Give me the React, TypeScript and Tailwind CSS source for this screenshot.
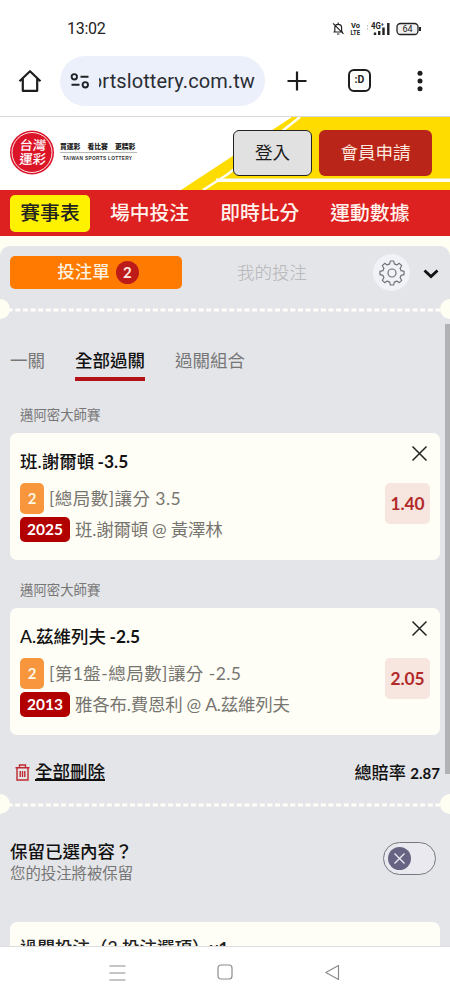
import React from 'react';

const navItems = ['賽事表', '場中投注', '即時比分', '運動數據'];

const bets = [
  {
    league: '邁阿密大師賽',
    player: '班.謝爾頓',
    handicap: '-3.5',
    market: '[總局數]讓分 3.5',
    code: '2025',
    match: '班.謝爾頓 @ 黃澤林',
    odds: '1.40',
  },
  {
    league: '邁阿密大師賽',
    player: 'A.茲維列夫',
    handicap: '-2.5',
    market: '[第1盤-總局數]讓分 -2.5',
    code: '2013',
    match: '雅各布.費恩利 @ A.茲維列夫',
    odds: '2.05',
  },
];

function StatusBar() {
  return (
    <div className="flex h-[56px] items-center justify-between pl-[67px] pr-[28px] pt-[2px]">
      <span className="font-['Roboto',sans-serif] text-[16px] leading-none tracking-[-0.3px] text-[#222]">13:02</span>
      <svg width="90" height="16" viewBox="0 0 90 16" fill="none" stroke="#222">
        {/* muted bell */}
        <path d="M1.5 11h9.5M2.8 10.500V6.7a3.4 3.4 0 0 1 6.8 0v3.800M6.2 3V1.500M5 13h2.4M1 2.300l10.500 10.500" strokeWidth="1.2" />
        {/* signal bars */}
        <path d="M43 14v-2.500M47.200 14v-4M51.500 14V6.500M56.300 14V2" strokeWidth="2.4" />
        {/* battery */}
        <rect x="65" y="2.500" width="21" height="11" rx="3.5" strokeWidth="1.3" fill="#f0f0f0" />
        <path d="M88 6v4" strokeWidth="2" />
        <g fill="#222" stroke="none" fontFamily="Roboto, sans-serif" fontWeight="700">
          <text x="19" y="7.2" fontSize="8" textLength="9" lengthAdjust="spacingAndGlyphs">Vo</text>
          <text x="18.500" y="14.2" fontSize="8" textLength="9.500" lengthAdjust="spacingAndGlyphs">LTE</text>
          <text x="39" y="8.2" fontSize="8.500" textLength="13" lengthAdjust="spacingAndGlyphs">4G⁺</text>
          <text x="70.500" y="11.300" fontSize="9" fontWeight="400">64</text>
        </g>
        <path d="M35.5 4v1.5M35.5 7v1.5" stroke="#bbb" />
      </svg>
    </div>
  );
}

function BrowserBar() {
  return (
    <div className="flex h-[61px] items-start border-b border-[#d9d9d9]">
      <svg className="ml-[18px] mt-[13px] shrink-0" width="24" height="24" viewBox="0 0 24 24" fill="none" stroke="#1d1d1d" strokeWidth="2.2">
        <path d="M1.500 12.2 12 2.2l10.500 10M4.800 9.500v12.300h14.400V9.500" strokeLinejoin="round" />
      </svg>
      <div className="ml-[18px] flex h-[50px] w-[205px] shrink-0 items-center rounded-full bg-[#ecf0fa] pl-[10px]">
        <svg width="20" height="18" viewBox="0 0 20 18" fill="none" stroke="#1f2328" strokeWidth="1.9">
          <circle cx="4.300" cy="4.800" r="2.700" />
          <path d="M10.500 4.800h8M1.500 12.800h8" />
          <circle cx="15.300" cy="12.800" r="2.700" />
        </svg>
        {/* the address is scrolled to its end */}
        <div className="ml-[9px] flex w-[156px] justify-end overflow-hidden">
          <span className="whitespace-nowrap font-['Roboto',sans-serif] text-[20px] leading-[26px] tracking-[0.1px] text-[#2a2d35]">sportslottery.com.tw</span>
        </div>
      </div>
      <svg className="ml-[22px] mt-[15px] shrink-0" width="20" height="20" viewBox="0 0 20 20" stroke="#1d1d1d" strokeWidth="2.200">
        <path d="M10 .5v19M.5 10h19" />
      </svg>
      <div className="ml-[41px] mt-[13px] flex h-[23px] w-[23px] items-center justify-center rounded-[6px] border-2 border-[#1d1d1d] font-['Roboto',sans-serif] text-[10.500px] font-bold leading-none text-[#1d1d1d]">
        :D
      </div>
      <svg className="ml-[45px] mt-[13px] shrink-0" width="8" height="24" viewBox="0 0 8 24" fill="#1d1d1d">
        <circle cx="4" cy="4.200" r="2.500" />
        <circle cx="4" cy="12" r="2.500" />
        <circle cx="4" cy="19.800" r="2.500" />
      </svg>
    </div>
  );
}

function SiteHeader() {
  return (
    <header className="relative flex h-[73px] shrink-0 items-start bg-white">
      <svg className="absolute inset-0" width="450" height="73" viewBox="0 0 450 73">
        <path d="M181 73 292 0H450V73Z" fill="#ffdc00" />
        <path d="M203 73 228 57 300 0" fill="none" stroke="#fffef5" strokeWidth="2.500" />
        <path d="M216 63.200H450" stroke="#fffef5" strokeWidth="3.500" />
      </svg>
      <svg className="relative ml-[9px] mt-[13px]" width="130" height="46" viewBox="0 0 130 46">
        <circle cx="23" cy="22.500" r="22" fill="#dc1428" />
        <circle cx="23" cy="22.500" r="20" fill="none" stroke="#fff" strokeWidth="0.900" />
        <g fill="#fff" fontFamily="'Noto Sans CJK TC', sans-serif" fontWeight="500" fontSize="13.300" transform="skewX(-5)">
          <text x="12" y="20.500">台灣</text>
          <text x="13" y="33.800">運彩</text>
        </g>
        <g fill="#222" fontFamily="'Noto Sans CJK TC', sans-serif" fontWeight="900" fontSize="6.800">
          <text x="51" y="18.500">買運彩</text>
          <text x="78.500" y="18.500">看比賽</text>
          <text x="106" y="18.500">更精彩</text>
        </g>
        <path d="M51 22.500h77" stroke="#999" strokeWidth="0.700" />
        <text x="54" y="29.500" fill="#333" fontFamily="'Liberation Sans', sans-serif" fontWeight="700" fontSize="4.800" textLength="69">TAIWAN SPORTS LOTTERY</text>
      </svg>
      <button className="relative ml-[94px] mt-[13px] h-[46px] w-[79px] rounded-[6px] border-[1.5px] border-[#222] bg-[#e1e1e1] text-[17.500px] text-[#1b1b1b]">
        登入
      </button>
      <button className="relative ml-[7px] mt-[13px] h-[46px] w-[113px] rounded-[6px] bg-[#b92619] text-[17.500px] text-[#ffe9df]">
        會員申請
      </button>
    </header>
  );
}

function Perforation() {
  return (
    <div className="relative -mx-[10px] h-[20px] overflow-hidden">
      <svg width="450" height="20" viewBox="0 0 450 20">
        <path d="M0 11h450" stroke="#fffef8" strokeWidth="3.200" strokeDasharray="5 2.640" />
        <circle cx="0" cy="10" r="10" fill="#fffef3" />
        <circle cx="450" cy="10" r="10" fill="#fffef3" />
      </svg>
    </div>
  );
}

function BetCard({ bet }: { bet: (typeof bets)[number] }) {
  return (
    <div>
      <div className="ml-[10px] h-[28px] text-[13.400px] leading-[20px] text-[#777]">{bet.league}</div>
      <div className="flex h-[127px] justify-between rounded-[7px] bg-[#fffef6] pl-[10px] pr-[10px]">
        <div className="pt-[17px]">
          <div className="h-[33px] whitespace-nowrap text-[17.500px] font-medium leading-[24px] text-[#111]">
            {bet.player} <span className="-ml-[1px] text-[17.300px] font-bold">{bet.handicap}</span>
          </div>
          <div className="flex h-[34px] items-start">
            <span className="flex h-[31px] w-[24px] items-center justify-center rounded-[5px] bg-[#f7963c] text-[15px] font-bold text-[#fff6e5]">2</span>
            <span className="ml-[5px] whitespace-nowrap text-[17.500px] leading-[32px] tracking-[0.450px] text-[#777570]">{bet.market}</span>
          </div>
          <div className="flex h-[25px] items-center">
            <span className="flex h-[25px] w-[50px] items-center justify-center rounded-[5px] bg-[#b20000] text-[15.500px] font-bold text-white">{bet.code}</span>
            <span className="ml-[5px] whitespace-nowrap text-[17.500px] leading-[25px] tracking-[-0.250px] text-[#777570]">{bet.match}</span>
          </div>
        </div>
        <div className="flex flex-col items-end pt-[12px]">
          <svg className="mr-[2px]" width="17" height="17" viewBox="0 0 17 17" stroke="#222" strokeWidth="1.500">
            <path d="m1.500 1.500 14 14M15.500 1.500l-14 14" />
          </svg>
          <div className="mt-[21px] flex h-[41px] w-[45px] items-center justify-center rounded-[5px] bg-[#f7e5df] pt-[1px] text-[17.300px] font-bold text-[#b12a2a]">
            {bet.odds}
          </div>
        </div>
      </div>
    </div>
  );
}

function GearIcon() {
  return (
    <svg width="26" height="26" viewBox="0 0 26 26" fill="none" stroke="#707078" strokeWidth="1.200" strokeLinejoin="round">
      <path d="M10.700 3.900 11.300 1h3.400l.6 2.900 2.500 1 2.500-1.600 2.400 2.400-1.600 2.500 1 2.500 2.900.6v3.400l-2.900.6-1 2.500 1.600 2.500-2.400 2.400-2.500-1.600-2.500 1-.6 2.900h-3.400l-.6-2.900-2.500-1-2.500 1.600-2.400-2.400 1.600-2.500-1-2.500L1 14.700v-3.400l2.900-.6 1-2.500-1.600-2.500 2.400-2.400 2.500 1.600z" />
      <circle cx="13" cy="13" r="4" />
    </svg>
  );
}

export default function App() {
  return (
    <div className="flex h-[1000px] w-[450px] flex-col overflow-hidden bg-white font-['Lato','Noto_Sans_CJK_TC',sans-serif]">
      <StatusBar />
      <BrowserBar />
      <SiteHeader />

      <nav className="flex h-[46px] shrink-0 items-center bg-[#dd2020] pl-[10px] text-[19.800px] font-medium">
        {navItems.map((item, i) => (
          <span
            key={item}
            className={
              i === 0
                ? 'mr-[20px] flex h-[37px] w-[80px] items-center justify-center rounded-[5px] bg-[#fff200] text-[#222]'
                : 'mr-[31px] whitespace-nowrap text-[#fff3ec]'
            }
          >
            {item}
          </span>
        ))}
      </nav>

      <main className="relative flex h-[710px] shrink-0 flex-col overflow-hidden bg-[#fffef3] pt-[10px]">
        <div className="h-[700px] shrink-0 rounded-t-[10px] bg-[#e4e5e8] px-[10px] pt-[10px]">
          {/* Slip tabs */}
          <div className="flex h-[33px] items-center">
            <div className="flex h-[33px] w-[172px] items-center justify-center rounded-[5px] bg-[#ff7a00] pl-[4px] text-[17.500px] font-medium text-[#fff1df]">
              投注單
              <span className="ml-[6px] flex h-[23px] w-[23px] items-center justify-center rounded-full bg-[#bd1a1a] text-[15px] font-bold text-[#ffe9e0]">2</span>
            </div>
            <span className="ml-[55px] pt-[2px] text-[17.500px] font-light text-[#b3b4b7]">我的投注</span>
            <span className="ml-[66px] flex h-[37px] w-[37px] shrink-0 items-center justify-center rounded-full bg-[#f1f2f7]">
              <GearIcon />
            </span>
            <svg className="ml-[13px] mt-[2px] shrink-0" width="16" height="12" viewBox="0 0 16 12" fill="none" stroke="#111" strokeWidth="2.800">
              <path d="m1.500 2.500 6.500 6 6.500-6" />
            </svg>
          </div>
          <div className="h-[10px]" />
          <Perforation />

          {/* Bet type tabs */}
          <div className="mt-[28px] flex h-[34px] gap-[30px] text-[17.500px] leading-[28px] text-[#777]">
            <span>一關</span>
            <span className="flex flex-col justify-between font-medium text-[#111]">
              全部過關
              <span className="h-[4px] bg-[#b51218]" />
            </span>
            <span>過關組合</span>
          </div>

          <div className="mt-[24px] flex flex-col gap-[20px]">
            {bets.map((bet) => (
              <BetCard key={bet.code} bet={bet} />
            ))}
          </div>

          <div className="mt-[24px] flex h-[26px] items-center justify-between text-[17.500px] font-medium text-[#111]">
            <div className="flex items-center pl-[5px]">
              <svg width="15" height="17" viewBox="0 0 15 17" fill="none" stroke="#bd2a30" strokeWidth="1.400">
                <path d="M.5 3.700h14M4.500 3.500V1h6v2.500M2 4v12h11V4M5.200 7v6M7.500 7v6M9.800 7v6" />
              </svg>
              <span className="ml-[5px] pt-[1px] underline decoration-2 underline-offset-[1px]">全部刪除</span>
            </div>
            <div className="pt-[1px] text-[17.200px]">
              總賠率 <span className="text-[15px] font-bold">2.87</span>
            </div>
          </div>
          <div className="h-[9px]" />
          <Perforation />

          {/* Keep selections */}
          <div className="mt-[25px] flex h-[83px] items-start justify-between">
            <div>
              <div className="text-[17.500px] font-medium leading-[25px] text-[#111]">保留已選內容？</div>
              <div className="text-[15.400px] leading-[18px] text-[#777]">您的投注將被保留</div>
            </div>
            <div className="mr-[4px] mt-[3px] flex h-[33px] w-[53px] items-center rounded-full border border-[#77777f] bg-[#e9e9ef] pl-[4px]">
              <div className="flex h-[23px] w-[23px] items-center justify-center rounded-full bg-[#676383]">
                <svg width="11" height="11" viewBox="0 0 11 11" stroke="#f0eef8" strokeWidth="1.300">
                  <path d="m.5.5 10 10M10.500.5l-10 10" />
                </svg>
              </div>
            </div>
          </div>

          <div className="h-[60px] whitespace-nowrap rounded-[7px] bg-[#fffef6] pl-[10px] pt-[13px] text-[17.500px] font-medium leading-[26px] text-[#222]">
            過關投注（2 投注選項）x<span className="font-bold">1</span>
          </div>
        </div>
        <div className="absolute right-0 top-[88px] h-[450px] w-[5px] bg-[#b0b2b3]" />
      </main>

      <footer className="flex h-[54px] shrink-0 items-start border-t border-[#ddd] bg-white pt-[17px]">
        <svg className="ml-[109px]" width="17" height="17" viewBox="0 0 17 17" stroke="#8c8c8c" strokeWidth="1.200">
          <path d="M.5 2h16M.5 9h16M.5 16h16" />
        </svg>
        <svg className="ml-[91px]" width="16" height="16" viewBox="0 0 16 16" fill="none" stroke="#8c8c8c" strokeWidth="1.200">
          <rect x="1" y="1" width="14" height="14" rx="3" />
        </svg>
        <svg className="ml-[91px]" width="17" height="17" viewBox="0 0 17 17" fill="none" stroke="#8c8c8c" strokeWidth="1.200" strokeLinejoin="round">
          <path d="M14.500 1.500v14L1.800 8.500z" />
        </svg>
      </footer>
    </div>
  );
}
